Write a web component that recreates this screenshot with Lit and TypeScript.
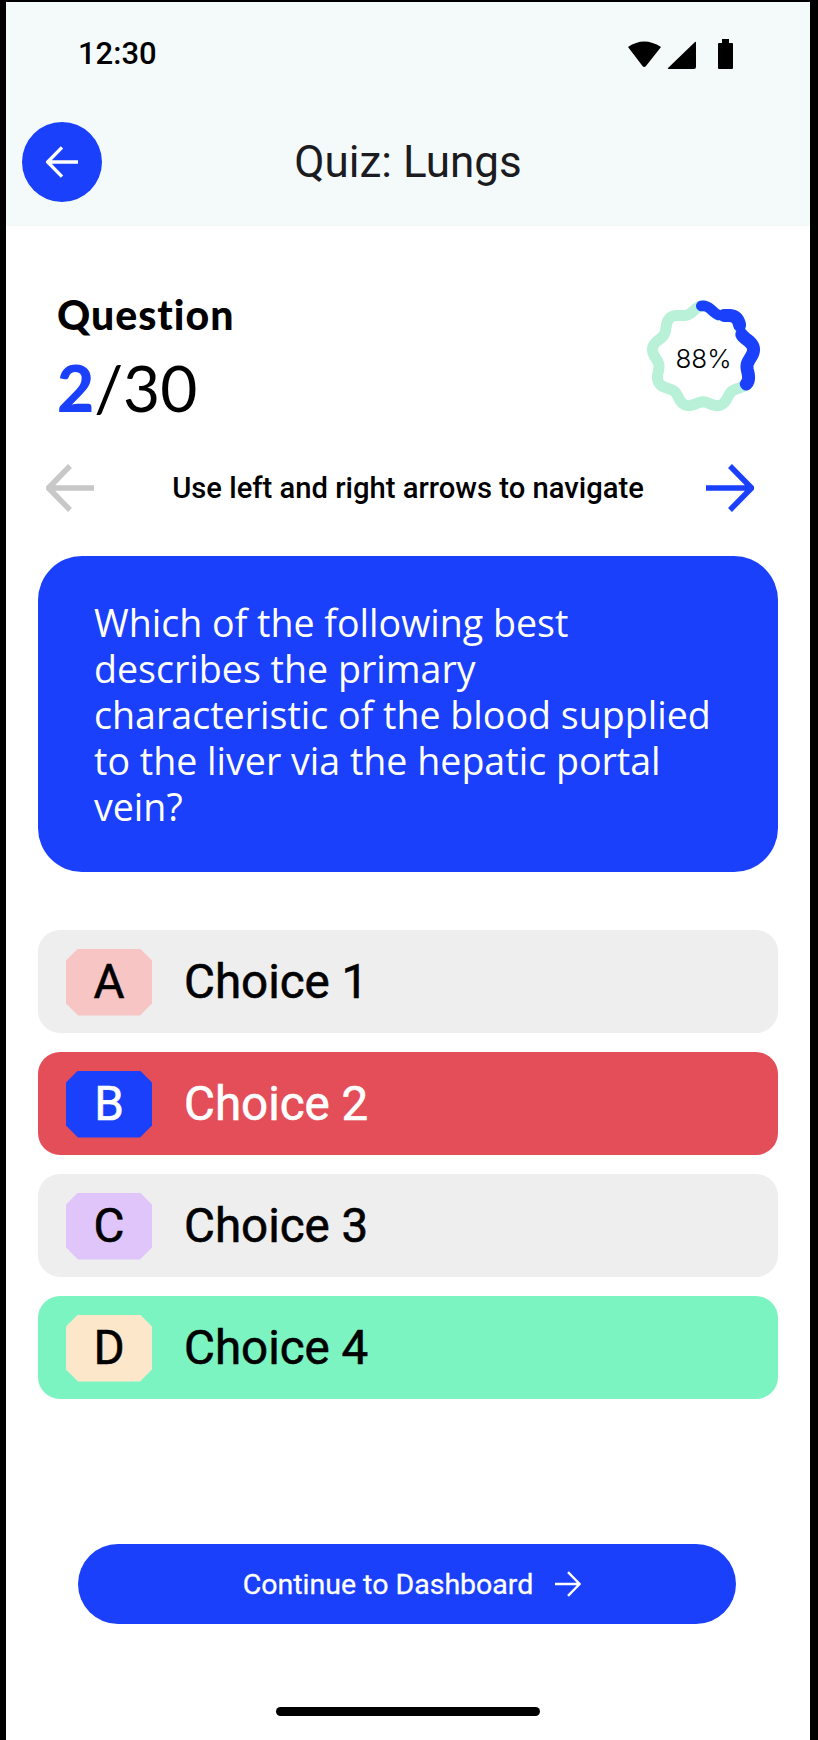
import { LitElement, html, css, svg } from "lit";
import { customElement } from "lit/decorators.js";

const wavy = (from: number, to: number, R = 48, a = 3.2, n = 9) => {
  const pts: string[] = [];
  for (let d = from; d <= to; d += 2) {
    const t = (d * Math.PI) / 180;
    const r = R + a * Math.cos(n * t);
    pts.push(`${(60 + r * Math.sin(t)).toFixed(2)} ${(60 - r * Math.cos(t)).toFixed(2)}`);
  }
  return "M" + pts.join("L");
};

const arrow = (cls: string, dir: "l" | "r") => html`<svg class=${cls} viewBox="0 0 48 48" fill="none" stroke="currentColor">
  ${dir === "l"
    ? svg`<path d="M48 24H3M24 2 2.5 24 24 46"/>`
    : svg`<path d="M0 24H45M24 2 45.5 24 24 46"/>`}
</svg>`;

const choices = [
  { k: "A", t: "Choice 1", row: "", badge: "pink" },
  { k: "B", t: "Choice 2", row: "wrong", badge: "blue" },
  { k: "C", t: "Choice 3", row: "", badge: "lilac" },
  { k: "D", t: "Choice 4", row: "right", badge: "sand" },
];

@customElement("app-root")
export class AppRoot extends LitElement {
  static styles = css`
    :host { display: block; font-family: Roboto, sans-serif; color: #000; }
    .frame { box-sizing: border-box; width: 818px; height: 1740px; background: #000; padding: 2px 8px 0 6px; }
    .screen { height: 100%; background: #fff; display: flex; flex-direction: column; }
    .top { background: #f4fafa; height: 224px; flex: none; }
    .status { height: 100px; box-sizing: border-box; padding: 35px 68px 0 72px; display: flex; justify-content: space-between; align-items: flex-start; }
    .time { font-size: 31px; font-weight: 500; line-height: 34px; }
    .status-icons { display: block; width: 114px; height: 32px; margin-top: 2px; }
    .bar { display: flex; align-items: center; position: relative; padding-left: 16px; height: 80px; margin-top: 20px; }
    .back { width: 80px; height: 80px; border-radius: 50%; background: #1a40fb; display: flex; align-items: center; justify-content: center; color: #fff; }
    .back svg { width: 32px; height: 32px; stroke-width: 5; }
    .title { flex: 1; text-align: center; font-size: 44px; font-weight: 400; color: #1c1b1f; line-height: 84px; margin-right: 96px; }
    .main { padding: 0 32px; flex: 1; display: flex; flex-direction: column; }
    .qhead { display: flex; justify-content: space-between; padding: 66px 0 0 19px; height: 148px; box-sizing: content-box; }
    .qlabel { font-family: Lato, sans-serif; font-weight: 900; font-size: 41px; line-height: 46px; letter-spacing: 1px; }
    .qnum { font-family: Lato, sans-serif; font-weight: 400; font-size: 64px; line-height: 70px; margin-top: 15px; }
    .qnum b { color: #1a40fb; font-weight: 900; }
    .ring { width: 120px; height: 120px; margin: 5px 15px 0 0; position: relative; display: flex; align-items: center; justify-content: center; font-family: Inter, sans-serif; font-size: 26px; font-weight: 300; padding: 2px 0 0 1px; box-sizing: border-box; }
    .ring svg { position: absolute; inset: 0; width: 120px; height: 120px; }
    .nav { display: flex; justify-content: space-between; align-items: center; padding: 0 24px 0 8px; margin-top: 24px; height: 48px; }
    .nav svg { width: 48px; height: 48px; stroke-width: 5.5; }
    .nav .prev { color: #c8c8c8; }
    .nav .next { color: #1a40fb; }
    .nav span { font-size: 29.2px; font-weight: 500; white-space: nowrap; margin-left: 16px; }
    .card { margin-top: 44px; background: #1a40fb; color: #fff; border-radius: 44px; height: 316px; box-sizing: border-box; padding: 44px 40px 0 56px; font-family: "Open Sans", sans-serif; font-size: 37.6px; line-height: 46px; white-space: nowrap; }
    .list { margin-top: 58px; display: flex; flex-direction: column; gap: 19px; }
    .row { height: 103px; border-radius: 22px; background: #eee; display: flex; align-items: center; padding-left: 28px; font-size: 47.5px; font-weight: 400; -webkit-text-stroke: 0.6px currentColor; }
    .row.wrong { background: #e34e58; color: #fff; }
    .row.right { background: #7bf4c2; }
    .badge { width: 86px; height: 67px; margin-top: 1px; display: flex; align-items: center; justify-content: center; clip-path: polygon(12px 0, calc(100% - 12px) 0, 100% 12px, 100% calc(100% - 12px), calc(100% - 12px) 100%, 12px 100%, 0 calc(100% - 12px), 0 12px); margin-right: 32px; }
    .pink { background: #f8c5c5; }
    .blue { background: #1a40fb; }
    .lilac { background: #dfc5fa; }
    .sand { background: #fde7cb; }
    .cta { margin: 145px 42px 0 40px; padding-left: 10px; height: 80px; border-radius: 40px; background: #1a40fb; color: #fff; display: flex; align-items: center; justify-content: center; gap: 22px; font-size: 28.5px; font-weight: 400; -webkit-text-stroke: 0.3px currentColor; }
    .cta svg { width: 26px; height: 26px; stroke-width: 4.4; }
    .home { margin: 83px auto 0; width: 264px; height: 9px; border-radius: 5px; background: #000; }
  `;

  render() {
    return html`<div class="frame"><div class="screen">
      <div class="top">
        <div class="status">
          <span class="time">12:30</span>
          <svg class="status-icons" viewBox="0 0 114 32">
            <path d="M0 8Q16-3 33 8L18 27Q16 29 14.500 27Z"/>
            <path d="M40 29 67 3Q68 2 68 4V28Q68 30 66 30H41Q39 30 40 29Z"/>
            <path d="M90 5Q90 4 91 4H94V0H101V4H104Q105 4 105 5V29Q105 30 104 30H91Q90 30 90 29Z"/>
          </svg>
        </div>
        <div class="bar">
          <div class="back">${arrow("", "l")}</div>
          <div class="title">Quiz: Lungs</div>
        </div>
      </div>
      <div class="main">
        <div class="qhead">
          <div>
            <div class="qlabel">Question</div>
            <div class="qnum"><b>2</b>/30</div>
          </div>
          <div class="ring">
            <svg viewBox="0 0 120 120" fill="none" stroke-linecap="round">
              <path d=${wavy(0, 360) + "Z"} stroke="#b8f0d8" stroke-width="11"/>
              <path d=${wavy(-2, 20)} stroke="#1a40fb" stroke-width="10.500"/>
              <path d=${wavy(27, 50)} stroke="#1a40fb" stroke-width="13"/>
              <path d=${wavy(60, 122)} stroke="#1a40fb" stroke-width="13"/>
            </svg>
            88%
          </div>
        </div>
        <div class="nav">
          ${arrow("prev", "l")}
          <span>Use left and right arrows to navigate</span>
          ${arrow("next", "r")}
        </div>
        <div class="card">Which of the following best<br>describes the primary<br>characteristic of the blood supplied<br>to the liver via the hepatic portal<br>vein?</div>
        <div class="list">
          ${choices.map(
            (c) => html`<div class="row ${c.row}"><div class="badge ${c.badge}">${c.k}</div>${c.t}</div>`
          )}
        </div>
        <div class="cta">Continue to Dashboard ${arrow("", "r")}</div>
        <div class="home"></div>
      </div>
    </div></div>`;
  }
}
